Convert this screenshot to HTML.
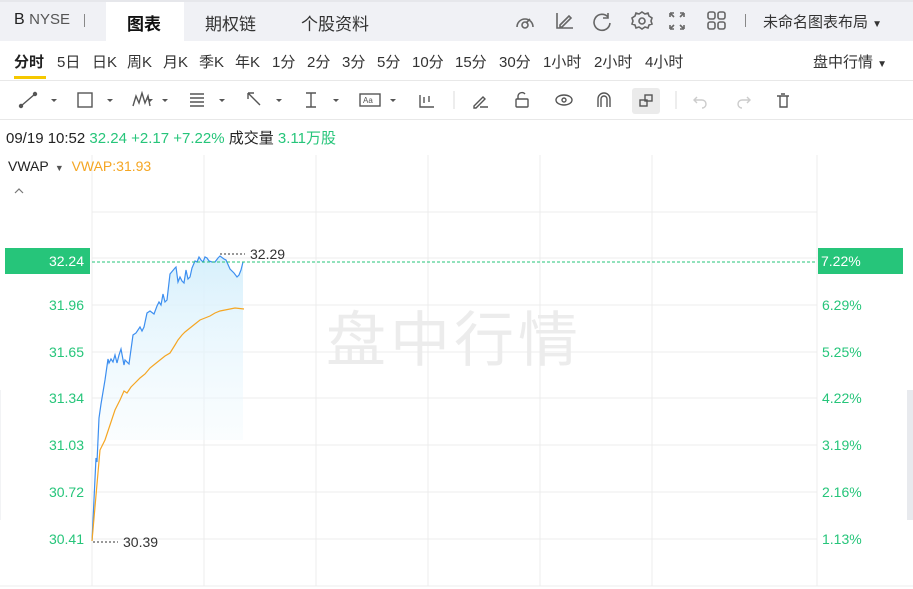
<!DOCTYPE html>
<html><head><meta charset="utf-8"><style>
*{margin:0;padding:0;box-sizing:border-box}
body{width:913px;height:589px;overflow:hidden;background:#fff;font-family:"Liberation Sans","Noto Sans CJK SC",sans-serif;position:relative;color:#333}
.a{position:absolute;white-space:nowrap}
.top{left:0;top:0;width:913px;height:41px;background:#f0f1f5}
.g{color:#26c57a}
.p{position:absolute;top:51px;font-size:15px;color:#333;white-space:nowrap}
</style></head><body>
<div class="a top"></div>
<div class="a" style="left:0;top:0;width:913px;height:2px;background:#e6e7eb"></div>
<div class="a" style="left:106px;top:2px;width:78px;height:39px;background:#fff"></div>
<div class="a" style="left:14px;top:11px;font-size:16px;color:#222">B <span style="font-size:15px;color:#555">NYSE</span></div>
<div class="a" style="left:84px;top:14px;width:1px;height:13px;background:#888"></div>
<div class="a" style="left:127px;top:10px;font-size:17px;font-weight:bold;color:#111">图表</div>
<div class="a" style="left:205px;top:10px;font-size:17px;color:#333">期权链</div>
<div class="a" style="left:301px;top:10px;font-size:17px;color:#333">个股资料</div>
<svg class="a" style="left:514px;top:10px" width="220" height="22" fill="none" stroke="#666" stroke-width="1.6">
<path d="M3 17a8 8 0 1 1 16 0"/><circle cx="11" cy="15" r="3"/><path d="M12 13l4-4"/>
<path d="M43 3v15h16M46 15l9-9 2 2-9 9h-2z"/>
<path d="M94 7a8 8 0 1 0 2 6M94 3v5h-5"/>
<circle cx="128" cy="11" r="3"/><path d="M128 2l3 2 3-1 1 3 3 2-1 3 1 3-3 1-1 3-3-1-3 2-3-2-3 1-1-3-3-1 1-3-1-3 3-2 1-3 3 1z"/>
<path d="M156 3h4M156 3v4M170 3h-4M170 3v4M156 19h4M156 19v-4M170 19h-4M170 19v-4M157 4l3 3M169 4l-3 3M157 18l3-3M169 18l-3-3"/>
<rect x="194" y="2" width="7" height="7" rx="2"/><rect x="204" y="2" width="7" height="7" rx="2"/><rect x="194" y="12" width="7" height="7" rx="2"/><rect x="204" y="12" width="7" height="7" rx="2"/>
</svg>
<div class="a" style="left:745px;top:14px;width:1px;height:13px;background:#888"></div>
<div class="a" style="left:763px;top:11px;font-size:15px;color:#333">未命名图表布局 <span style="font-size:10px">▼</span></div>
<b class="p" style="left:14px;color:#222">分时</b>
<span class="p" style="left:57px">5日</span>
<span class="p" style="left:92px">日K</span>
<span class="p" style="left:127px">周K</span>
<span class="p" style="left:163px">月K</span>
<span class="p" style="left:199px">季K</span>
<span class="p" style="left:235px">年K</span>
<span class="p" style="left:272px">1分</span>
<span class="p" style="left:307px">2分</span>
<span class="p" style="left:342px">3分</span>
<span class="p" style="left:377px">5分</span>
<span class="p" style="left:412px">10分</span>
<span class="p" style="left:455px">15分</span>
<span class="p" style="left:499px">30分</span>
<span class="p" style="left:543px">1小时</span>
<span class="p" style="left:594px">2小时</span>
<span class="p" style="left:645px">4小时</span>
<div class="a" style="left:14px;top:76px;width:32px;height:3px;background:#f5c800"></div>
<div class="a" style="left:813px;top:51px;font-size:15px;color:#333">盘中行情 <span style="font-size:10px">▼</span></div>
<div class="a" style="left:0;top:80px;width:913px;height:1px;background:#e8e8e8"></div>
<svg class="a" style="left:0;top:81px" width="913" height="38" fill="none" stroke="#555" stroke-width="1.4">
<path d="M21 25l14-12"/><circle cx="21" cy="25" r="1.5" fill="#555"/><circle cx="35" cy="13" r="1.5" fill="#555"/>
<rect x="78" y="12" width="14" height="14"/>
<path d="M133 25l3-10 3 7 3-10 3 10 3-7 2 10"/>
<path d="M190 13h14M190 17h14M190 21h14M190 25h14"/>
<path d="M248 12l12 12M248 12h6M248 12v6"/>
<path d="M306 12h10M306 26h10M311 12v14"/>
<rect x="360" y="13" width="20" height="12"/><text x="363" y="22" font-size="8" fill="#555" stroke="none">Aa</text>
<path d="M420 14v12h14M424 16v6M429 15v6"/>
<path d="M474 25l9-9 2 2-9 9h-2zM480 26h8"/>
<rect x="516" y="18" width="12" height="8" rx="1"/><path d="M518 18v-3a4 4 0 0 1 7-2"/>
<ellipse cx="564" cy="19" rx="8" ry="5"/><circle cx="564" cy="19" r="2"/>
<path d="M598 26v-8a6 6 0 0 1 12 0v8M601 26v-8a3 3 0 0 1 6 0v8"/>
<rect x="632" y="7" width="28" height="26" rx="3" fill="#ebebeb" stroke="none"/>
<rect x="640" y="19" width="7" height="6"/><rect x="645" y="14" width="7" height="6"/>
<path stroke="#ccc" d="M697 16l-3 3 3 3M694 19h8a4 4 0 0 1 0 8M747 16l3 3-3 3M750 19h-8a4 4 0 0 0 0 8"/>
<path d="M777 15h12M780 15v11h7v-11M781 13h4"/>
<path d="M147 18l3 3 3-3M51 18l3 3 3-3M107 18l3 3 3-3M162 18l3 3 3-3M219 18l3 3 3-3M276 18l3 3 3-3M333 18l3 3 3-3M390 18l3 3 3-3" fill="#555" stroke="none"/>
<path d="M454 10v18M676 10v18" stroke="#e5e5e5"/>
</svg>
<div class="a" style="left:0;top:119px;width:913px;height:1px;background:#e8e8e8"></div>
<div class="a" style="left:6px;top:127px;font-size:15px;color:#222">09/19 10:52 <span class="g">32.24 +2.17 +7.22%</span> 成交量 <span class="g">3.11万股</span></div>
<svg class="a" style="left:0;top:150px" width="913" height="439">
<g stroke="#ececec" stroke-width="1">
<path d="M92 5V436M204 5V436M316 5V436M428 5V436M540 5V436M652 5V436M817 5V436"/>
<path d="M92 62H817M92 108H817M92 155H817M92 202H817M92 248H817M92 295H817M92 342H817M92 389H817M0 436H913"/>
</g>
<path d="M0 240V370" stroke="#e5e7eb"/>
<rect x="907" y="240" width="6" height="130" fill="#e8eaee"/>
<text x="454" y="211" font-size="60" fill="#ececec" text-anchor="middle" font-family="Noto Sans CJK SC" letter-spacing="4">盘中行情</text>
<defs><linearGradient id="f" x1="0" y1="0" x2="0" y2="1"><stop offset="0" stop-color="#d7f0fc"/><stop offset="1" stop-color="#fff" stop-opacity="0"/></linearGradient></defs>
<path fill="url(#f)" d="M92 391L96 308 97 312 99 268 101 254 105 230 108 209 109 213 111 209 113 212 115 205 117 213 119 205 121 199 124 215 125 210 129 214 133 185 136 183 140 177 142 181 144 177 147 163 150 161 154 164 157 156 159 152 161 155 163 144 165 152 167 150 170 124 175 118 176 117 178 132 180 127 182 131 184 133 186 120 188 129 190 127 192 118 195 111 197 112 199 107 201 110 203 112 205 107 207 108 209 111 212 112 215 112 218 108 220 106 224 109 226 110 230 119 234 123 237 127 239 125 241 120 243 112 V290 H92Z"/>
<polyline fill="none" stroke="#3d8ff0" stroke-width="1.2" points="92,391 96,308 97,312 99,268 101,254 105,230 108,209 109,213 111,209 113,212 115,205 117,213 119,205 121,199 124,215 125,210 129,214 133,185 136,183 140,177 142,181 144,177 147,163 150,161 154,164 157,156 159,152 161,155 163,144 165,152 167,150 170,124 175,118 176,117 178,132 180,127 182,131 184,133 186,120 188,129 190,127 192,118 195,111 197,112 199,107 201,110 203,112 205,107 207,108 209,111 212,112 215,112 218,108 220,106 224,109 226,110 230,119 234,123 237,127 239,125 241,120 243,112"/>
<polyline fill="none" stroke="#f5a623" stroke-width="1.2" points="92,391 100,300 105,290 110,275 115,260 120,250 124,241 127,243 131,237 135,233 140,228 145,224 150,218 155,214 160,210 165,206 170,203 175,195 178,190 182,185 185,182 190,178 195,174 200,170 205,168 210,166 215,163 220,161 225,160 230,159 235,158 244,159"/>
<path d="M92 112H817" stroke="#26c57a" stroke-dasharray="3 2"/>
<path d="M220 104H245M93 392H118" stroke="#333" stroke-dasharray="2 2"/>
<text x="250" y="109" font-size="14" fill="#333">32.29</text>
<text x="123" y="397" font-size="14" fill="#333">30.39</text>
<rect x="5" y="98" width="85" height="26" fill="#26c57a"/>
<text x="84" y="116" font-size="14" fill="#fff" text-anchor="end">32.24</text>
<rect x="818" y="98" width="85" height="26" fill="#26c57a"/>
<text x="821" y="116" font-size="14" fill="#fff">7.22%</text>
<g font-size="14" fill="#26c57a" text-anchor="end">
<text x="84" y="160">31.96</text><text x="84" y="207">31.65</text><text x="84" y="253">31.34</text><text x="84" y="300">31.03</text><text x="84" y="347">30.72</text><text x="84" y="394">30.41</text>
</g>
<g font-size="14" fill="#26c57a">
<text x="822" y="160">6.29%</text><text x="822" y="207">5.25%</text><text x="822" y="253">4.22%</text><text x="822" y="300">3.19%</text><text x="822" y="347">2.16%</text><text x="822" y="394">1.13%</text>
</g>
<path d="M15 43l4-4 4 4" fill="none" stroke="#777" stroke-width="1.2"/>
</svg>
<div class="a" style="left:8px;top:158px;font-size:14px;color:#222">VWAP <span style="font-size:9px;color:#555">&nbsp;▼</span>&nbsp; <span style="color:#f5a623">VWAP:31.93</span></div>
</body></html>
